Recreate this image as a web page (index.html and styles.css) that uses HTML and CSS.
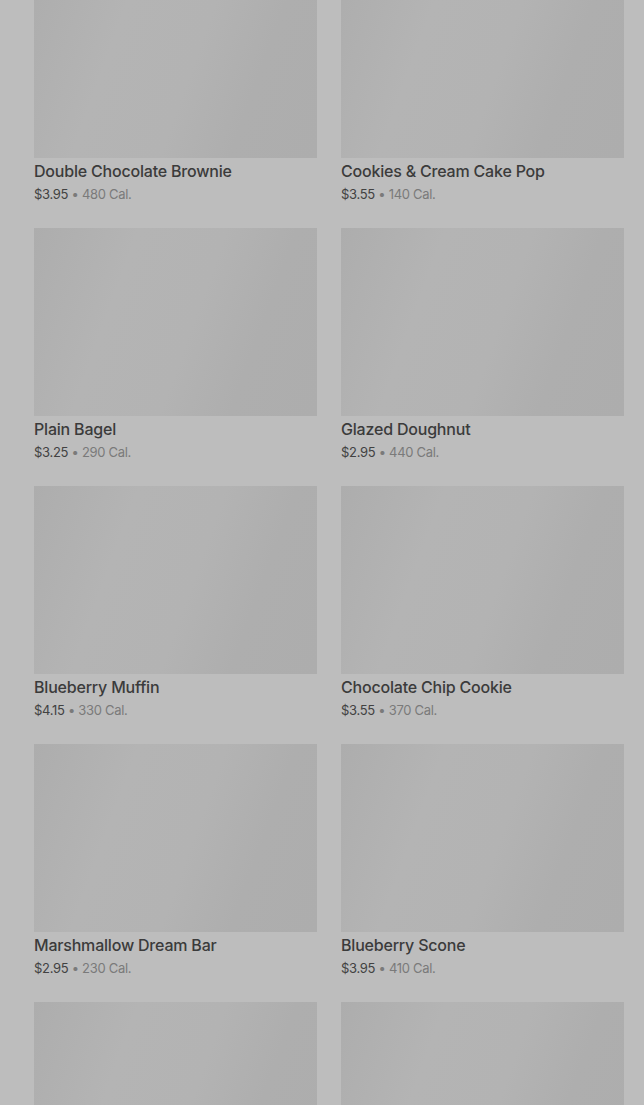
FILE: index.html
```html
<!DOCTYPE html>
<html lang="en">
<head>
    <meta charset="UTF-8">
    <title>Bakery</title>
    <link rel="stylesheet" href="styles.css">
</head>
<body>
    <div class="menu">
        <div class="item">
            <div class="foto"></div>
            <p class="nombre">Double Chocolate Brownie</p>
            <p class="precio">$3.95 <span>• 480 Cal.</span></p>
        </div>
        <div class="item">
            <div class="foto"></div>
            <p class="nombre">Cookies &amp; Cream Cake Pop</p>
            <p class="precio">$3.55 <span>• 140 Cal.</span></p>
        </div>
        <div class="item">
            <div class="foto"></div>
            <p class="nombre">Plain Bagel</p>
            <p class="precio">$3.25 <span>• 290 Cal.</span></p>
        </div>
        <div class="item">
            <div class="foto"></div>
            <p class="nombre">Glazed Doughnut</p>
            <p class="precio">$2.95 <span>• 440 Cal.</span></p>
        </div>
        <div class="item">
            <div class="foto"></div>
            <p class="nombre">Blueberry Muffin</p>
            <p class="precio">$4.15 <span>• 330 Cal.</span></p>
        </div>
        <div class="item">
            <div class="foto"></div>
            <p class="nombre">Chocolate Chip Cookie</p>
            <p class="precio">$3.55 <span>• 370 Cal.</span></p>
        </div>
        <div class="item">
            <div class="foto"></div>
            <p class="nombre">Marshmallow Dream Bar</p>
            <p class="precio">$2.95 <span>• 230 Cal.</span></p>
        </div>
        <div class="item">
            <div class="foto"></div>
            <p class="nombre">Blueberry Scone</p>
            <p class="precio">$3.95 <span>• 410 Cal.</span></p>
        </div>
        <div class="item">
            <div class="foto"></div>
        </div>
        <div class="item">
            <div class="foto"></div>
        </div>
    </div>
</body>
</html>
```

FILE: styles.css
```css
body {
    margin: 0;
    background-color: #bdbdbd;
    font-family: Inter, Roboto, "Liberation Sans", sans-serif;
    overflow: hidden;
}

.menu {
    display: grid;
    grid-template-columns: 1fr 1fr;
    column-gap: 24px;
    row-gap: 25px;
    padding: 0 20px 0 34px;
    margin-top: -30px;
}

.foto {
    height: 188px;
    background: linear-gradient(110deg, #adadad 0%, #b4b4b4 30%, #b3b3b3 55%, #aeaeae 75%, #adadad 100%);
}

p {
    margin: 0;
    padding: 0;
}

.nombre {
    margin-top: 3px;
    font-size: 16px;
    line-height: 20px;
    font-weight: 500;
    letter-spacing: -0.2px;
    color: #3b3b3b;
}

.precio {
    margin-top: 4px;
    font-size: 13px;
    line-height: 18px;
    letter-spacing: -0.3px;
    color: #424242;
}

.precio span {
    color: #7a7a7a;
}
```
